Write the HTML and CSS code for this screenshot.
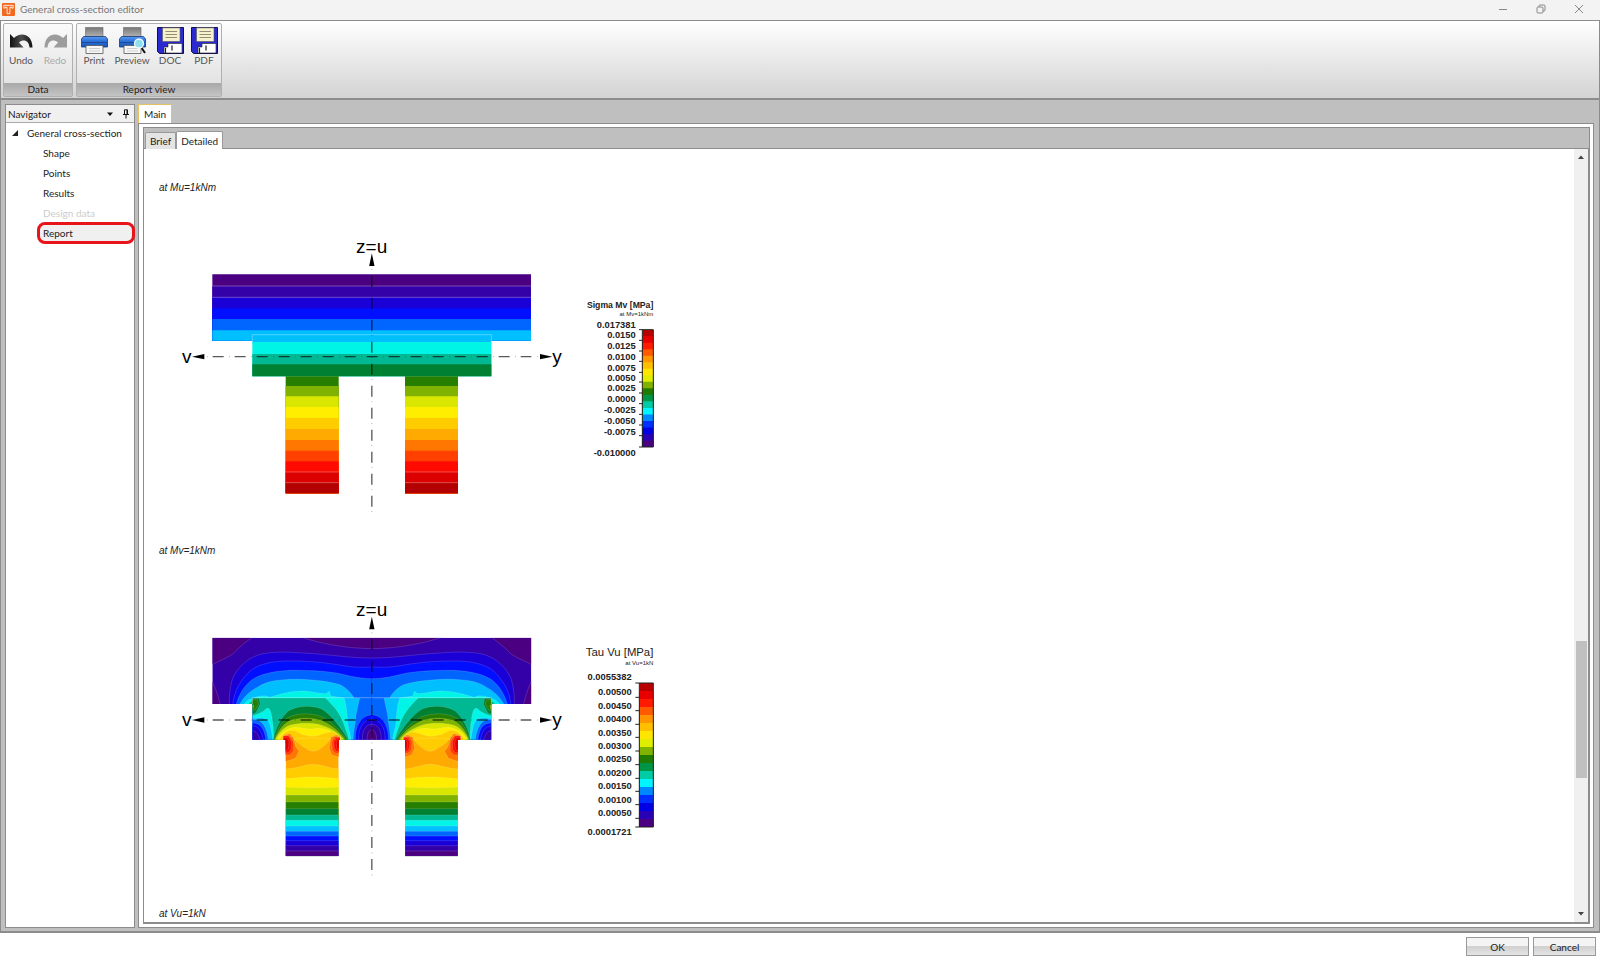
FILE: index.html
```html
<!DOCTYPE html>
<html lang="en">
<head>
<meta charset="utf-8">
<title>General cross-section editor</title>
<link rel="stylesheet" href="styles.css">
</head>
<body>
<svg class="defs" aria-hidden="true">
  <defs>
    <linearGradient id="blueBody" x1="0" y1="0" x2="0" y2="1"><stop offset="0" stop-color="#5d9cf0"/><stop offset=".4" stop-color="#2f74dc"/><stop offset="1" stop-color="#1a56b8"/></linearGradient>
    <linearGradient id="paperGrey" x1="0" y1="0" x2="0" y2="1"><stop offset="0" stop-color="#777"/><stop offset="1" stop-color="#b4b4b4"/></linearGradient>
    <linearGradient id="arrowDark" x1="0" y1="0" x2="1" y2="0"><stop offset="0" stop-color="#111"/><stop offset=".5" stop-color="#4c4c4c"/><stop offset="1" stop-color="#111"/></linearGradient>
    <symbol id="printer" viewBox="0 0 27 27">
      <path d="M4.500 .5H22V10H4.500Z" fill="url(#paperGrey)" stroke="#666" stroke-width=".6"/>
      <path d="M2.500 9.500H24.500L26.500 12V20H.5V12Z" fill="url(#blueBody)" stroke="#153a78" stroke-width=".8"/>
      <path d="M1 15.500H26" stroke="#15418c" stroke-width=".8"/>
      <path d="M5 18.500H22V26.500H5Z" fill="#f7f7f7" stroke="#555" stroke-width=".8"/>
      <path d="M8 21.500H19M8 24H19" stroke="#bbb" stroke-width=".7"/>
    </symbol>
    <symbol id="floppy" viewBox="0 0 27 27">
      <path d="M.5 .5H26.500V26.500H2.500L.5 24.500Z" fill="#2a2ad0" stroke="#111150"/>
      <path d="M5.500 .8H23V14.500H5.500Z" fill="#f6f1cc" stroke="#555" stroke-width=".6"/>
      <path d="M8.500 4.500H20M8.500 7.500H20M8.500 10.500H20" stroke="#85816a" stroke-width=".9"/>
      <path d="M11 16.500H25V26H7V20H11Z" fill="#fff" stroke="#222" stroke-width=".6"/>
      <path d="M8.500 21V26M15 18.500V23.500" stroke="#222" stroke-width="1.200"/>
    </symbol>
    <symbol id="swoosh" viewBox="0 0 23 15">
      <path d="M0 1L4 5C10 -1 22 0 22.500 14.500H19.500C19 8 14 5.500 9 9.500L13.500 14.500H0Z"/>
    </symbol>
    <symbol id="scale" viewBox="0 0 1 18" preserveAspectRatio="none">
      <path fill="#b80000" d="M0 0H1V18H0Z"/><path fill="#e80000" d="M0 1H1V18H0Z"/><path fill="#ff1a00" d="M0 2H1V18H0Z"/><path fill="#ff5a00" d="M0 3H1V18H0Z"/><path fill="#ff9500" d="M0 4H1V18H0Z"/><path fill="#ffbf00" d="M0 5H1V18H0Z"/><path fill="#ffe600" d="M0 6H1V18H0Z"/><path fill="#dfee00" d="M0 7H1V18H0Z"/><path fill="#80b300" d="M0 8H1V18H0Z"/><path fill="#207c00" d="M0 9H1V18H0Z"/><path fill="#009445" d="M0 10H1V18H0Z"/><path fill="#00cba4" d="M0 11H1V18H0Z"/><path fill="#00f5ff" d="M0 12H1V18H0Z"/><path fill="#0088ff" d="M0 13H1V18H0Z"/><path fill="#0030ff" d="M0 14H1V18H0Z"/><path fill="#0000e4" d="M0 15H1V18H0Z"/><path fill="#2a00b4" d="M0 16H1V18H0Z"/><path fill="#4b0082" d="M0 17H1V18H0Z"/>
    </symbol>
    <g id="axes">
      <path class="axis" d="M128 380H1084M605.500 137V830"/>
      <path class="axis-dot" d="M111 380H1105M605.500 117V850"/>
      <path d="M66 380L103 372V388ZM1147 380L1110 372V388ZM605.500 70L597.500 108H613.500Z"/>
      <text class="axis-name" x="605" y="69" text-anchor="middle">z=u</text>
      <text class="axis-name" x="50" y="399" text-anchor="middle">v</text>
      <text class="axis-name" x="1161" y="399" text-anchor="middle">y</text>
    </g>
    <clipPath id="halfShape"><path d="M127 143H606V449H506V799H347V449H247V342H127Z"/></clipPath>
    <clipPath id="halfWeb"><path d="M247 323H606V449H506V460H347V449H247Z"/></clipPath>
    <g id="half" clip-path="url(#halfShape)">
      <g class="contour">
        <path fill="#3400a8" d="M120 140H610V460H120Z"/>
        <path fill="#4b0082" d="M120 140H250C220 160 205 175 188 192C165 208 145 212 120 228ZM388 140C440 157 520 176 610 176V140ZM120 262C134 285 142 310 151 345H120Z"/>
        <path fill="#1a00d6" d="M178 345C177 310 182 275 193 255C210 225 240 200 275 192C310 185 350 185 400 189C480 193 540 205 610 204V345Z"/>
        <path fill="#000fff" d="M188 345C192 300 213 270 240 243C265 222 310 212 360 213C430 213 480 220 520 227C555 233 580 232 610 231V345Z"/>
        <path fill="#0066ff" d="M198 345C208 310 225 285 248 268C280 248 330 241 375 241C420 241 460 243 500 249C540 258 565 266 610 266V345Z"/>
        <path fill="#00bfff" d="M208 345C222 318 245 300 265 290C290 272 340 267 390 268C440 270 480 275 512 285C530 295 545 310 552 325H250V345Z"/>
        <path fill="#00f5e6" d="M218 345L235 330L262 320L283 317L300 322C330 312 365 303 400 303C425 304 450 312 468 311L478 304L482 318L520 324V345Z"/>
        <path fill="#00b894" d="M232 345L244 334H260V345Z"/>
      </g>
      <g class="contour" clip-path="url(#halfWeb)">
        <path fill="#0066ff" d="M245 323H610V460H245Z"/>
        <path fill="#00bfff" d="M245 323H569C565 345 557 370 556 395C552 420 549 435 549 460H245Z"/>
        <path fill="#00f5e6" d="M245 323H522C530 350 532 375 532 395C535 415 541 430 545 460H310C304 420 302 400 292 390C280 380 262 383 245 387Z"/>
        <path fill="#00b894" d="M245 323H465C495 350 512 375 520 398C526 415 533 430 540 460H312C310 420 310 395 302 365C298 352 290 352 283 362C270 370 258 375 245 378Z"/>
        <path fill="#0066ff" d="M245 389C275 386 290 405 297 460H245Z"/>
        <path fill="#000fff" d="M245 399C270 398 284 412 289 460H245Z"/>
        <path fill="#1a00d6" d="M245 408C265 408 277 422 281 460H245Z"/>
        <path fill="#3400a8" d="M245 422C258 422 268 434 272 460H245Z"/>
        <path fill="#008033" d="M245 325H267L271 342L258 368L245 375Z"/>
        <path fill="#267f00" d="M245 329H261L266 342L255 360L245 364Z"/>
        <path fill="#80b300" d="M245 346H251L249 358H245Z"/>
        <path fill="#008033" d="M308 460C313 420 330 385 355 363C380 347 425 344 455 357C485 375 515 415 541 460Z"/>
        <path fill="#267f00" d="M309 460C317 430 330 400 352 384C380 368 425 368 455 380C485 395 515 425 538 460Z"/>
        <path fill="#80b300" d="M310 460C320 430 335 405 358 393C385 382 425 382 455 392C485 405 510 425 534 460Z"/>
        <path fill="#d9e600" d="M311 460C323 430 340 412 362 405C390 398 425 399 450 404C480 412 510 430 530 460Z"/>
        <path fill="#ffee00" d="M315 460C328 432 345 418 370 412C395 410 415 422 440 415C470 412 500 430 525 460Z"/>
        <path fill="#ffcc00" d="M323 460C332 437 346 423 365 421C380 421 385 432 410 436C440 445 455 428 485 425C500 430 510 440 519 460Z"/>
        <path fill="#ff7700" d="M333 460L343 435L360 431L370 445V460ZM482 460L490 437L503 435L512 460Z"/>
      </g>
      <g class="contour">
        <path fill="#000fff" d="M556 450C555 405 575 375 606 375V450Z"/>
        <path fill="#1a00d6" d="M566 450C564 410 583 388 606 388V450Z"/>
        <path fill="#3400a8" d="M577 450C576 417 590 403 606 403V450Z"/>
        <path fill="#4b0082" d="M591 450C591 430 597 420 606 418V450Z"/>
      </g>
      <g class="contour">
        <path fill="#ffaa00" d="M347 449H506V799H347Z"/>
        <path fill="#ffcc00" d="M372 445C382 462 400 468 412 478C425 486 438 485 448 478C462 470 470 460 484 445ZM347 537C385 535 400 524 430 523C460 524 475 535 506 537V799H347Z"/>
        <path fill="#ffee00" d="M347 566C385 563 405 561 430 561C460 561 480 564 506 566V799H347Z"/>
        <path fill="#d9e600" d="M347 591C400 594 450 594 506 591V799H347Z"/>
        <path fill="#80b300" d="M347 615H506V799H347Z"/>
        <path fill="#267f00" d="M347 636H506V799H347Z"/>
        <path fill="#008033" d="M347 656H506V799H347Z"/>
        <path fill="#00b894" d="M347 675H506V799H347Z"/>
        <path fill="#00f5e6" d="M347 691H506V799H347Z"/>
        <path fill="#00bfff" d="M347 708H506V799H347Z"/>
        <path fill="#0066ff" d="M347 724H506V799H347Z"/>
        <path fill="#000fff" d="M347 738H506V799H347Z"/>
        <path fill="#1a00d6" d="M347 752H506V799H347Z"/>
        <path fill="#3400a8" d="M347 767H506V799H347Z"/>
        <path fill="#4b0082" d="M347 783H506V799H347Z"/>
        <path fill="#ff7700" d="M340 440H369L377 470L387 484L376 505L340 517ZM510 440H483L477 475L486 495L510 502Z"/>
        <path fill="#ff4000" d="M340 437H358L370 455L371 482L360 495H340ZM510 440H494L485 455L487 480L497 490H510Z"/>
        <path fill="#ff0a00" d="M340 438H355L364 455L363 478L355 488H340ZM510 443H500L491 456L493 475L501 485H510Z"/>
        <path fill="#dd0000" d="M340 443H352L357 456L355 477L350 482H340ZM510 447H503L499 458L500 475L510 480Z"/>
      </g>
    </g>
  </defs>
</svg>

<header class="titlebar">
  <svg class="app-logo" viewBox="0 0 14 14"><rect width="14" height="14" rx="1" fill="#f26a21"/><path d="M2 2.500H12V5.500H10.500V4.500H8.500V11.500H5.500V4.500H3.500V5.500H2Z" fill="none" stroke="#fff" stroke-width=".9"/></svg>
  <h1>General cross-section editor</h1>
  <div class="window-buttons">
    <button aria-label="Minimize"><svg viewBox="0 0 10 10"><path d="M1 5.500H9"/></svg></button>
    <button aria-label="Restore"><svg viewBox="0 0 10 10"><rect x="1" y="3" width="6" height="6" rx="1"/><path d="M3 3V2Q3 1 4 1H8Q9 1 9 2V6Q9 7 8 7H7"/></svg></button>
    <button aria-label="Close"><svg viewBox="0 0 10 10"><path d="M1 1L9 9M9 1L1 9"/></svg></button>
  </div>
</header>

<div class="ribbon">
  <section class="group">
    <div class="tools">
      <button class="tool"><svg class="tool-icon" viewBox="0 0 27 27"><use href="#swoosh" x="2" y="6" width="23" height="15" fill="url(#arrowDark)"/></svg>Undo</button>
      <button class="tool" disabled><svg class="tool-icon" viewBox="0 0 27 27"><use href="#swoosh" x="2" y="6" width="23" height="15" fill="#9c9c9c" transform="translate(27 0) scale(-1 1)"/></svg>Redo</button>
    </div>
    <h2>Data</h2>
  </section>
  <section class="group">
    <div class="tools">
      <button class="tool"><svg class="tool-icon" viewBox="0 0 27 27"><use href="#printer" width="27" height="27"/></svg>Print</button>
      <button class="tool wide"><svg class="tool-icon" viewBox="0 0 27 27"><use href="#printer" width="27" height="27"/><path d="M22 20L26 26" stroke="#111" stroke-width="2"/><circle cx="20" cy="16.500" r="4.500" fill="#8fdff0" stroke="#eefcff" stroke-width="1.300"/></svg>Preview</button>
      <button class="tool"><svg class="tool-icon" viewBox="0 0 27 27"><use href="#floppy" width="27" height="27"/></svg>DOC</button>
      <button class="tool"><svg class="tool-icon" viewBox="0 0 27 27"><use href="#floppy" width="27" height="27"/></svg>PDF</button>
    </div>
    <h2>Report view</h2>
  </section>
</div>

<main class="workspace">
  <nav class="navigator" aria-label="Navigator">
    <div class="nav-head"><h2>Navigator</h2>
      <button aria-label="Menu"><svg viewBox="0 0 8 10"><path d="M1 3.500H7L4 7Z"/></svg></button>
      <button aria-label="Pin"><svg viewBox="0 0 8 10"><path d="M2.500 .8H5.500V5.500H2.500ZM1 5.500H7M4 5.500V9.500M5 1V5" fill="none" stroke="#111"/></svg></button>
    </div>
    <a class="root" href="#general"><svg viewBox="0 0 8 8"><path d="M7 1V7H1Z"/></svg>General cross-section</a>
    <a href="#shape">Shape</a>
    <a href="#points">Points</a>
    <a href="#results">Results</a>
    <a class="off" aria-disabled="true">Design data</a>
    <a class="selected" href="#report">Report</a>
  </nav>

  <section class="document">
    <div class="main-tabs"><button class="main-tab">Main</button></div>
    <div class="frame">
      <div class="sub-tabs"><button class="sub-tab">Brief</button><button class="sub-tab current">Detailed</button></div>
      <div class="viewer">
        <div class="report">
          <article class="entry">
            <p>at Mu=1kNm</p>
            <svg class="figure" viewBox="0 0 1500 870">
              <g>
                <path fill="#4b0082" d="M127 133H1083V332H127Z"/><path fill="#3400a8" d="M127 168H1083V332H127Z"/><path fill="#1a00d6" d="M127 202H1083V332H127Z"/><path fill="#000fff" d="M127 235H1083V332H127Z"/><path fill="#0066ff" d="M127 267H1083V332H127Z"/><path fill="#00bfff" d="M127 301H1083V332H127Z"/>
                <path fill="#00bfff" d="M247 314H964V340H247Z"/><path fill="#00f5e6" d="M247 336H964V439H247Z"/><path fill="#00b894" d="M247 372H964V439H247Z"/><path fill="#008033" d="M247 403H964V439H247Z"/>
                <path class="seam" d="M127 168H1083M127 202H1083M247 336V314H964V336"/>
                <path fill="#267f00" d="M347 439h159V790h-159ZM705 439h159V790h-159Z"/><path fill="#80b300" d="M347 468h159V790h-159ZM705 468h159V790h-159Z"/><path fill="#d9e600" d="M347 499h159V790h-159ZM705 499h159V790h-159Z"/><path fill="#ffee00" d="M347 531h159V790h-159ZM705 531h159V790h-159Z"/><path fill="#ffcc00" d="M347 564h159V790h-159ZM705 564h159V790h-159Z"/><path fill="#ffaa00" d="M347 597h159V790h-159ZM705 597h159V790h-159Z"/><path fill="#ff7700" d="M347 630h159V790h-159ZM705 630h159V790h-159Z"/><path fill="#ff4000" d="M347 662h159V790h-159ZM705 662h159V790h-159Z"/><path fill="#ff0a00" d="M347 694h159V790h-159ZM705 694h159V790h-159Z"/><path fill="#dd0000" d="M347 726h159V790h-159ZM705 726h159V790h-159Z"/><path fill="#b30000" d="M347 758h159V790h-159ZM705 758h159V790h-159Z"/>
                <path class="seam" d="M347 726h159M705 726h159M347 758h159M705 758h159"/>
              </g>
              <use href="#axes"/>
              <g class="legend" transform="translate(1200 180)">
                <text class="legend-title" x="250" y="54">Sigma Mv [MPa]</text>
                <text class="legend-note" x="250" y="77">at Mv=1kNm</text>
                <use href="#scale" x="217" y="119" width="33" height="352"/>
                <path class="ticks" d="M250 119H207M207 151h10M207 183h10M207 214h10M207 247h10M207 276h10M207 309h10M207 341h10M207 373h10M207 405h10M207 437h10M207 471H250M217 119V471M250 119V471"/>
                <text x="197" y="113">0.017381</text><text x="197" y="144">0.0150</text><text x="197" y="177">0.0125</text><text x="197" y="209">0.0100</text><text x="197" y="242">0.0075</text><text x="197" y="272">0.0050</text><text x="197" y="304">0.0025</text><text x="197" y="336">0.0000</text><text x="197" y="369">-0.0025</text><text x="197" y="401">-0.0050</text><text x="197" y="434">-0.0075</text><text x="197" y="499">-0.010000</text>
              </g>
            </svg>
          </article>
          <article class="entry">
            <p>at Mv=1kNm</p>
            <svg class="figure" viewBox="0 9 1500 870">
              <use href="#half"/>
              <use href="#half" transform="translate(1211 0) scale(-1 1)"/>
              <path class="seam" d="M247 342V323H964V342"/>
              <use href="#axes" y="10"/>
              <g class="legend" transform="translate(1200 150)">
                <text class="legend-title light" x="250" y="47">Tau Vu [MPa]</text>
                <text class="legend-note" x="250" y="76">at Vu=1kN</text>
                <use href="#scale" x="208" y="129" width="42" height="432"/>
                <path class="ticks" d="M250 129H196M196 172h12M196 212h12M196 253h12M196 292h12M196 333h12M196 374h12M196 415h12M196 454h12M196 494h12M196 535h12M196 561H250M208 129V561M250 129V561"/>
                <text x="185" y="121">0.0055382</text><text x="185" y="166">0.00500</text><text x="185" y="206">0.00450</text><text x="185" y="246">0.00400</text><text x="185" y="287">0.00350</text><text x="185" y="327">0.00300</text><text x="185" y="366">0.00250</text><text x="185" y="407">0.00200</text><text x="185" y="448">0.00150</text><text x="185" y="489">0.00100</text><text x="185" y="529">0.00050</text><text x="185" y="586">0.0001721</text>
              </g>
            </svg>
          </article>
          <article class="entry"><p>at Vu=1kN</p></article>
        </div>
        <div class="scrollbar">
          <svg viewBox="0 0 8 6"><path d="M1 5L4 1.500L7 5Z"/></svg>
          <div class="track"><div class="thumb"></div></div>
          <svg viewBox="0 0 8 6"><path d="M1 1L4 4.500L7 1Z"/></svg>
        </div>
      </div>
    </div>
  </section>
</main>

<footer class="actions"><button>OK</button><button>Cancel</button></footer>
</body>
</html>
```
FILE: styles.css
```css
* { box-sizing: border-box; }
body {
  margin: 0;
  height: 100vh;
  display: flex;
  flex-direction: column;
  overflow: hidden;
  background: #fff;
  color: #222;
  font: 10px/14px Lato, "Open Sans", sans-serif;
}
h1, h2, p { margin: 0; font-size: inherit; font-weight: 400; }
button { margin: 0; padding: 0; border: 0; background: none; font: inherit; color: inherit; }
a { color: inherit; text-decoration: none; }
svg { display: block; }
.defs { position: absolute; width: 0; height: 0; }

.titlebar { display: flex; align-items: center; height: 20px; padding: 0 12px 2px 2px; background: #f3f3f3; color: #777; }
.app-logo { width: 13px; height: 13px; margin-right: 5px; }
.window-buttons { display: flex; gap: 28px; margin-left: auto; padding-right: 4px; }
.window-buttons svg { width: 10px; height: 10px; fill: none; stroke: #888; stroke-width: 1; }

.ribbon {
  display: flex;
  gap: 3px;
  height: 80px;
  padding: 2px 2px 1px;
  border: 1px solid #8c8c8c;
  border-bottom-width: 2px;
  background: linear-gradient(#fff, #d3d3d3);
}
.group { display: flex; flex-direction: column; border: 1px solid #b0b0b0; border-radius: 2px; background: linear-gradient(#fafafa, #dedede); color: #555; }
.tools { display: flex; flex: 1; padding: 2px 0; }
.tool { display: flex; flex-direction: column; align-items: center; width: 34px; line-height: 12px; }
.tool.wide { width: 42px; }
.tool:disabled { color: #aaa; }
.tool-icon { width: 27px; height: 27px; margin-top: 1px; }
.group h2 { height: 13px; line-height: 13px; text-align: center; color: #222; background: linear-gradient(#a8a8a8, #c4c4c4); }

.workspace { flex: 1; min-height: 0; display: flex; gap: 3px; padding: 4px 5px 3px 4px; background: #bfbfbf; border: 1px solid #8c8c8c; border-width: 0 1px 2px; }
.navigator { display: flex; flex-direction: column; width: 130px; background: #fff; border: 1px solid #8c8c8c; }
.nav-head { display: flex; align-items: center; height: 18px; padding: 0 4px 0 2px; background: #f0f0f0; border-bottom: 1px solid #aaa; }
.nav-head h2 { flex: 1; }
.nav-head button { margin-left: 8px; }
.nav-head svg { width: 8px; height: 10px; fill: #111; }
.navigator a { height: 20px; padding-left: 37px; line-height: 20px; }
.navigator a.root { display: flex; align-items: center; padding-left: 5px; }
.root svg { width: 8px; height: 8px; margin-right: 8px; fill: #222; }
.navigator a.off { color: #ccc; }
.navigator a.selected { height: 22px; margin: -1px -1px 0 31px; padding-left: 3px; line-height: 16px; background: #f0f0f0; border: 3px solid #e8141b; border-radius: 8px; }

.document { flex: 1; min-width: 0; display: flex; flex-direction: column; }
.main-tabs { height: 19px; }
.main-tab { height: 100%; padding: 0 5px; background: #fff; border: 1px solid #e5c365; border-bottom: 0; }
.frame { flex: 1; min-height: 0; display: flex; flex-direction: column; padding: 3px 3px 3px 4px; background: #fff; border: 1px solid #8c8c8c; }
.sub-tabs { display: flex; align-items: flex-end; height: 22px; padding-left: 1px; background: #bfbfbf; border: 1px solid #8c8c8c; border-bottom: 0; box-shadow: inset 0 -1px #8c8c8c; }
.sub-tab { height: 17px; padding: 0 4px; background: #e4e4e4; border: 1px solid #999; border-bottom: 0; border-radius: 2px 2px 0 0; }
.sub-tab.current { height: 18px; background: #fff; }
.viewer { flex: 1; min-height: 0; display: flex; border: 1px solid #8c8c8c; border-width: 0 2px 2px 1px; }
.report { flex: 1; overflow: hidden; padding: 32px 15px 0; font: italic 10px/14px "Liberation Sans", Arial, sans-serif; }
.entry { height: 363px; }
.figure { width: 500px; height: 290px; margin: 35px 0 0 11px; font-style: normal; }
.scrollbar { display: flex; flex-direction: column; align-items: center; width: 14px; padding: 5px 0; background: #f0f0f0; }
.scrollbar svg { width: 8px; height: 6px; fill: #444; }
.track { flex: 1; width: 11px; display: flex; flex-direction: column; }
.track::before { content: ""; flex: 480; }
.track::after { content: ""; flex: 133; }
.thumb { flex: 136; background: #c0c0c0; }

.axis { fill: none; stroke: #000; stroke-opacity: .65; stroke-width: 4; stroke-dasharray: 33 33; }
.axis-dot { fill: none; stroke: #000; stroke-opacity: .3; stroke-width: 3; stroke-dasharray: 3 63; }
.axis-name { font-size: 57px; }
.seam { fill: none; stroke: #fff; stroke-opacity: .3; stroke-width: 3; }
.contour path { stroke: #fff; stroke-opacity: .22; stroke-width: 2; }
.legend { font-size: 28px; font-weight: 700; text-anchor: end; fill: #222; }
.legend-title { font-size: 26px; }
.legend-title.light { font-size: 34px; font-weight: 400; }
.legend-note { font-size: 18px; font-weight: 400; }
.ticks { fill: none; stroke: #222; stroke-width: 3; }

.actions { display: flex; justify-content: flex-end; gap: 4px; padding: 4px 4px 2px; }
.actions button { width: 63px; height: 19px; border: 1px solid #999; background: linear-gradient(#f4f4f4 0 45%, #d0d0d0 50%, #e4e4e4); }
```
